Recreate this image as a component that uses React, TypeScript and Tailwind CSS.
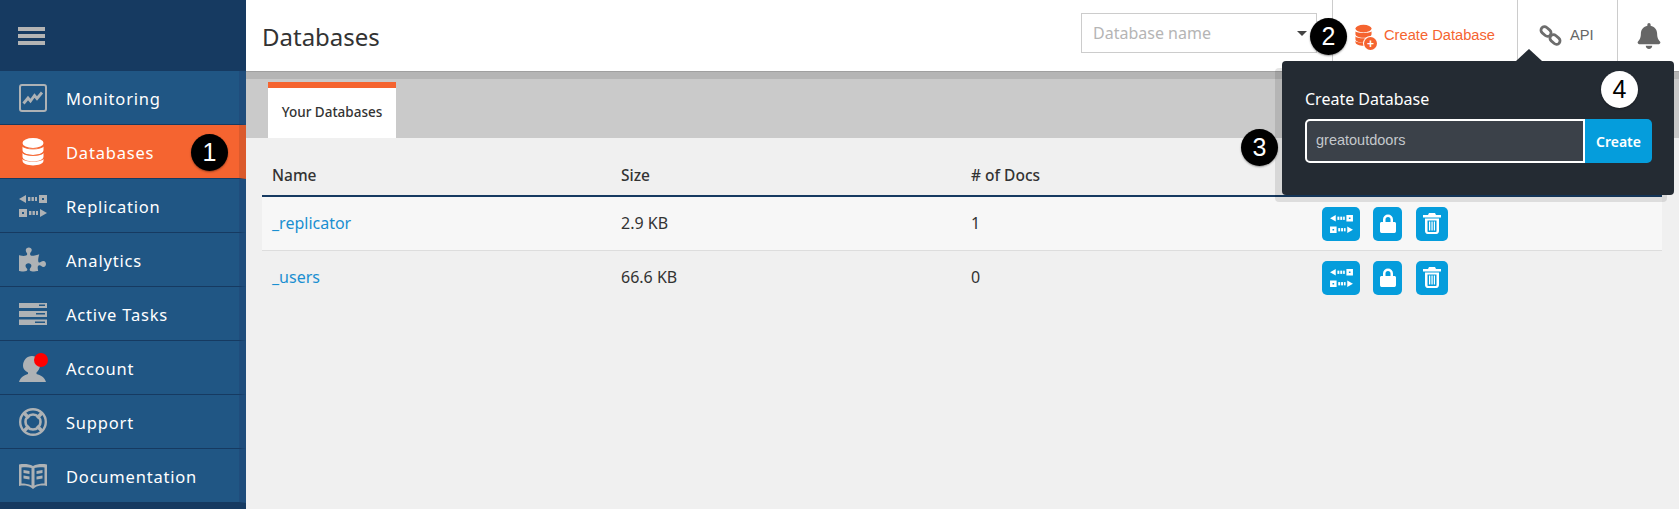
import React from 'react';
import { FaBell, FaPuzzlePiece } from 'react-icons/fa';

const DbIcon = ({ color, gap }: { color: string; gap: string }) => (
  <svg width="24" height="30" viewBox="0 0 24 30">
    <ellipse cx="12" cy="6" rx="10.5" ry="5" fill={color} />
    <path d="M1.5 9.5c2 3 19 3 21 0V13c0 6.500-21 6.500-21 0Z" fill={color} />
    <path d="M1.500 16c2 3.500 19 3.500 21 0v3.500c0 6.500-21 6.500-21 0Z" fill={color} />
    <path d="M1.500 22c2 3.500 19 3.500 21 0v1.500c0 6.500-21 6.500-21 0Z" fill={color} />
    <path d="M1.500 9c3 4 18 4 21 0M1.500 15.500c3 4 18 4 21 0" stroke={gap} strokeWidth="0.8" fill="none" />
  </svg>
);

const MonitorIcon = () => (
  <svg width="28" height="28" viewBox="0 0 28 28" fill="none">
    <rect x="1" y="1" width="26" height="26" rx="2" stroke="#aeb2b5" strokeWidth="2" />
    <path d="M4.500 19.500 9 14l2.500 3 4-5.500 2.500 3 5-6" stroke="#aeb2b5" strokeWidth="2.800" />
  </svg>
);

const ReplicationIcon = ({ color, width = 28, height = 22 }: { color: string; width?: number; height?: number }) => (
  <svg width={width} height={height} viewBox="0 0 28 22" fill={color}>
    <path d="M0 4 7 0v8Z" />
    <rect x="9" y="2" width="2.400" height="4" />
    <rect x="12.500" y="2" width="2.400" height="4" />
    <rect x="16" y="2" width="2" height="4" />
    <path fillRule="evenodd" d="M20 0h8v8h-8Zm3 3v2h2V3Z" />
    <path fillRule="evenodd" d="M0 14h8v8H0Zm3 3v2h2v-2Z" />
    <rect x="10" y="16" width="2.400" height="4" />
    <rect x="13.500" y="16" width="2.400" height="4" />
    <rect x="17" y="16" width="2" height="4" />
    <path d="M21 14l7 4-7 4Z" />
  </svg>
);

const ServerIcon = () => (
  <svg width="28" height="22" viewBox="0 0 28 22" fill="#aeb2b5">
    <path fillRule="evenodd" d="M0 0h28v5H0Zm20 1.500v1.500h6V1.500Z" />
    <path fillRule="evenodd" d="M0 8h28v6H0Zm17 2v1.500h9V10Z" />
    <path fillRule="evenodd" d="M0 16.500h28V22H0Zm16 2v1.500h10v-1.500Z" />
  </svg>
);

const PersonIcon = () => (
  <svg width="28" height="28" viewBox="0 0 28 28" fill="#aeb2b5">
    <path d="M4 12c0-6 4-10 9-10s8 4 8 9c0 3-1.500 6-3.500 7.500V20c4 1 8 3 9.500 8H0c1.500-5 5.500-7 9-8v-1.500C6 17 4 15 4 12Z" />
  </svg>
);

const LifeRingIcon = () => (
  <svg width="28" height="28" viewBox="0 0 28 28" fill="none">
    <circle cx="14" cy="14" r="12.800" stroke="#aeb2b5" strokeWidth="2.400" />
    <circle cx="14" cy="14" r="7.500" stroke="#aeb2b5" strokeWidth="2.600" />
    <path d="M5 5l5 5M23 5l-5 5M5 23l5-5M23 23l-5-5" stroke="#aeb2b5" strokeWidth="3.500" />
  </svg>
);

const BookIcon = () => (
  <svg width="28" height="28" viewBox="0 0 28 28" fill="#aeb2b5">
    <path fillRule="evenodd" d="M0 2.500c5-1 10-.5 14 1.500 4-2 9-2.500 14-1.500V24c-5-1-9-.5-12 1.500L14 27l-2-1.500C9 23.500 5 23 0 24ZM2.500 5.500v16c3.500 0 7 .5 10 2V6C9.500 5 6 5 2.500 5.500Zm23 0C22 5 18.500 5 15.500 6v17.500c3-1.500 6.500-2 10-2Z" />
    <path d="M4.500 8l6 1v3l-6-1Zm0 5.500 6 1v3l-6-1ZM23.500 8l-6 1v3l6-1Zm0 5.500-6 1v3l6-1Z" />
  </svg>
);

const LinkIcon = () => (
  <svg width="23" height="23" viewBox="0 0 23 23" fill="none" stroke="#6d6d6d" strokeWidth="2.800">
    <rect x="1.500" y="4" width="11" height="7" rx="3.500" transform="rotate(40 7 7.500)" />
    <rect x="10.500" y="12" width="11" height="7" rx="3.500" transform="rotate(40 16 15.500)" />
  </svg>
);

const LockIcon = () => (
  <svg width="16" height="19" viewBox="0 0 16 19" fill="white">
    <path fillRule="evenodd" d="M3 8V5.500a5 5 0 0 1 10 0V8h1.500c.8 0 1.500.700 1.500 1.500V17c0 1-.7 2-1.500 2h-13C.700 19 0 18 0 17V9.500C0 8.700.700 8 1.500 8Zm2.500 0h5V5.500a2.500 2.500 0 0 0-5 0Z" />
  </svg>
);

const TrashIcon = () => (
  <svg width="18" height="21" viewBox="0 0 18 21" fill="white">
    <path fillRule="evenodd" d="M6 0h6l1 2h5v2.500H0V2h5Z" />
    <path fillRule="evenodd" d="M2 5.500h14V18c0 1.500-1 3-2.500 3h-9C3 21 2 19.500 2 18Zm2.500 2V18c0 .5.300 1 .5 1h8c.2 0 .5-.5.500-1V7.500Zm1.500 1h1.300v9H6Zm2.400 0h1.300v9H8.400Zm2.400 0H12v9h-1.200Z" />
  </svg>
);

const Badge = ({ n, className }: { n: number; className: string }) => (
  <div className={`absolute z-30 flex h-[37px] w-[37px] items-center justify-center rounded-full text-[25px] font-['Liberation_Sans',sans-serif] shadow-[0_1px_2px_rgba(0,0,0,0.4)] ${className}`}>
    {n}
  </div>
);

const navItems = [
  { label: 'Monitoring', icon: <MonitorIcon /> },
  { label: 'Databases', icon: <DbIcon color="#ffffff" gap="#f56430" />, active: true },
  { label: 'Replication', icon: <ReplicationIcon color="#aeb2b5" /> },
  { label: 'Analytics', icon: <FaPuzzlePiece size={27} color="#aeb2b5" /> },
  { label: 'Active Tasks', icon: <ServerIcon /> },
  {
    label: 'Account',
    icon: (
      <div className="relative">
        <PersonIcon />
        <span className="absolute -right-[1px] -top-[1px] h-[14px] w-[14px] rounded-full bg-[#ff0000]" />
      </div>
    ),
  },
  { label: 'Support', icon: <LifeRingIcon /> },
  { label: 'Documentation', icon: <BookIcon /> },
];

const rows = [
  { name: '_replicator', size: '2.9 KB', docs: '1', striped: true },
  { name: '_users', size: '66.6 KB', docs: '0', striped: false },
];

export default function App() {
  return (
    <div className="relative flex h-[509px] w-[1679px] overflow-hidden bg-[#f0f0f0] font-['Noto_Sans',sans-serif] text-[#333333]">
      {/* Sidebar */}
      <aside className="flex w-[246px] shrink-0 flex-col bg-[#163a61]">
        <div className="flex h-[71px] items-center pl-[18px]">
          <div className="flex w-[27px] flex-col gap-[3px]">
            <span className="h-[4px] bg-[#b4b4b4]" />
            <span className="h-[4px] bg-[#b4b4b4]" />
            <span className="h-[4px] bg-[#b4b4b4]" />
          </div>
        </div>
        {navItems.map((item) => (
          <div
            key={item.label}
            className={`flex h-[54px] items-center border-b border-[#163a61] border-r-[7px] ${
              item.active ? 'border-r-[#db5a2c] bg-[#f56430]' : 'border-r-[#1f4d7c] bg-[#205684]'
            }`}
          >
            <div className="flex w-[65px] shrink-0 justify-center">{item.icon}</div>
            <span className="pl-[1px] pt-[4px] text-[16.500px] tracking-[0.8px] text-white">{item.label}</span>
          </div>
        ))}
      </aside>

      {/* Main */}
      <div className="flex min-w-0 flex-1 flex-col">
        <header className="flex h-[72px] shrink-0 items-center border-b border-b-[#a0a0a0] bg-white pl-[16px]">
          <h1 className="pt-[3px] text-[24px] text-[#333333]">Databases</h1>
          <div className="ml-auto flex h-full items-center">
            <div className="mb-[5px] mr-[15px] flex h-[40px] w-[236px] items-center justify-between border border-[#cccccc] pl-[11px] pr-[9px]">
              <span className="text-[16px] text-[#b5b5b5]">Database name</span>
              <span className="h-0 w-0 border-x-[5px] border-t-[5px] border-x-transparent border-t-[#444444]" />
            </div>
            <div className="flex h-full w-[185px] items-center gap-[10px] border-l border-[#cccccc] pl-[22px] font-['Liberation_Sans',sans-serif] text-[14.700px] text-[#f56430]">
              <div className="relative -ml-[2px]">
                <svg width="21" height="23" viewBox="0 0 24 30">
                  <ellipse cx="12" cy="6" rx="10.500" ry="5" fill="#f56430" />
                  <path d="M1.500 9.500c2 3 19 3 21 0V13c0 6.500-21 6.500-21 0Z" fill="#f56430" />
                  <path d="M1.500 16c2 3.500 19 3.500 21 0v3.500c0 6.500-21 6.500-21 0Z" fill="#f56430" />
                  <path d="M1.500 22c2 3.500 19 3.500 21 0v1.500c0 6.500-21 6.500-21 0Z" fill="#f56430" />
                </svg>
                <span className="absolute -bottom-[3px] -right-[3px] flex h-[13px] w-[13px] items-center justify-center rounded-full bg-[#f56430] text-[12px] font-bold leading-none text-white ring-1 ring-white">
                  +
                </span>
              </div>
              <span>Create Database</span>
            </div>
            <div className="flex h-full w-[100px] items-center gap-[8px] border-l border-[#cccccc] pl-[21px] font-['Liberation_Sans',sans-serif] text-[14.700px] text-[#666666]">
              <LinkIcon />
              <span>API</span>
            </div>
            <div className="flex h-full w-[62px] items-center border-l border-[#cccccc] pl-[18px]">
              <FaBell size={26} color="#666666" />
            </div>
          </div>
        </header>

        <div className="h-[7px] shrink-0 bg-[#b5b5b5]" />

        <div className="flex h-[59px] shrink-0 items-end bg-[#cacaca] pl-[22px]">
          <div className="flex h-[56px] w-[128px] items-center justify-center border-t-[6px] border-[#f56430] bg-white pb-[2px] text-[13.500px] font-medium text-[#333333]">
            Your Databases
          </div>
        </div>

        <div className="pl-[16px] pr-[17px]">
          <div className="flex h-[59px] items-end border-b-2 border-[#163a61] pb-[8px] text-[15.500px] font-medium">
            <span className="w-[359px] pl-[10px]">Name</span>
            <span className="w-[350px]">Size</span>
            <span className="w-[351px]"># of Docs</span>
          </div>
          {rows.map((row) => (
            <div
              key={row.name}
              className={`flex h-[54px] items-center border-b text-[16px] ${
                row.striped ? 'border-[#dddddd] bg-[#f7f7f7]' : 'border-transparent'
              }`}
            >
              <span className="w-[359px] pb-[1px] pl-[10px] text-[#1a8fd1]">{row.name}</span>
              <span className="w-[350px] pb-[1px]">{row.size}</span>
              <span className="w-[351px] pb-[1px]">{row.docs}</span>
              <div className="flex items-center">
                <div className="flex h-[34px] w-[38px] items-center justify-center rounded-[5px] bg-[#059ddc]">
                  <ReplicationIcon color="white" width={23} height={18} />
                </div>
                <div className="ml-[13px] flex h-[34px] w-[29px] items-center justify-center rounded-[5px] bg-[#059ddc]">
                  <LockIcon />
                </div>
                <div className="ml-[14px] flex h-[34px] w-[32px] items-center justify-center rounded-[5px] bg-[#059ddc]">
                  <TrashIcon />
                </div>
              </div>
            </div>
          ))}
        </div>
      </div>

      {/* Create database popover */}
      <div className="absolute left-[1282px] top-[61px] z-20 h-[134px] w-[392px] rounded-[4px] bg-[#242b33] pl-[23px] pt-[27px] shadow-[-7px_7px_0_rgba(0,0,0,0.1)]">
        <div className="absolute -top-[12px] left-[234px] h-0 w-0 border-x-[13px] border-b-[12px] border-x-transparent border-b-[#242b33]" />
        <div className="text-[16px] leading-[22px] text-white">Create Database</div>
        <div className="mt-[9px] flex h-[44px]">
          <div className="flex w-[280px] items-center rounded-l-[5px] border-2 border-white bg-[#3b4149] pl-[9px] font-['Liberation_Sans',sans-serif] text-[14.500px] text-[#c4c8cc]">
            greatoutdoors
          </div>
          <div className="flex w-[67px] items-center justify-center rounded-r-[5px] bg-[#059ddc] pt-[1px] text-[14px] font-semibold text-white">
            Create
          </div>
        </div>
      </div>

      <Badge n={1} className="left-[191px] top-[134px] bg-black text-white" />
      <Badge n={2} className="left-[1310px] top-[18px] bg-black text-white" />
      <Badge n={3} className="left-[1241px] top-[129px] bg-black text-white" />
      <Badge n={4} className="left-[1601px] top-[71px] bg-white text-black" />
    </div>
  );
}
